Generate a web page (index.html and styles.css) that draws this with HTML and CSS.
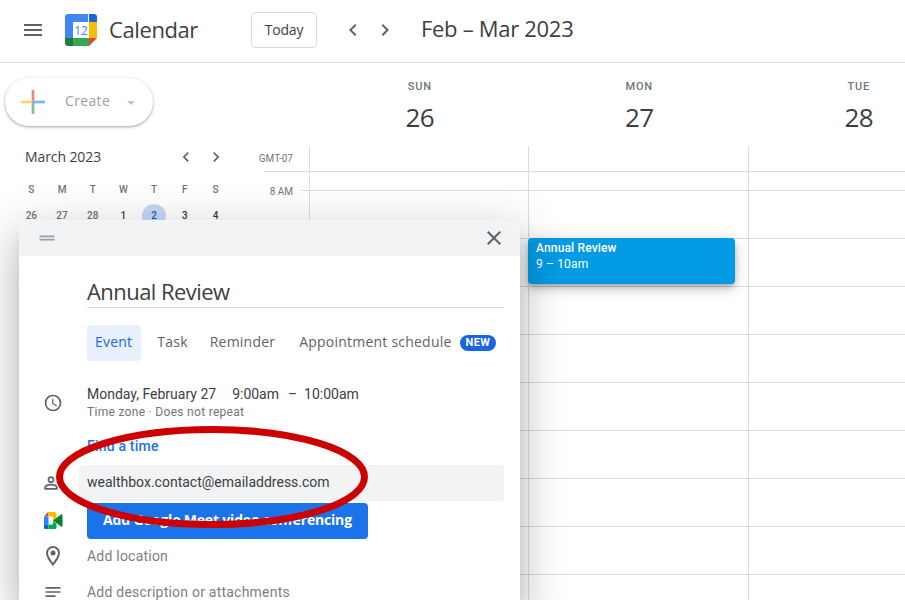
FILE: index.html
```html
<!DOCTYPE html>
<html lang="en">
<head>
<meta charset="utf-8">
<title>Calendar</title>
<link rel="stylesheet" href="styles.css">
</head>
<body>
<div class="app">
  <header class="topbar">
    <button class="icon-btn menu" aria-label="Main menu">
      <svg width="24" height="24" viewBox="0 0 24 24"><path fill="#5f6368" d="M3 18h18v-2H3v2zm0-5h18v-2H3v2zm0-7v2h18V6H3z"/></svg>
    </button>
    <svg class="logo" width="32" height="32" viewBox="0 0 32 32">
      <path fill="#4285f4" d="M3 0h20v8H8v16H0V3a3 3 0 0 1 3-3z"/>
      <path fill="#1967d2" d="M24 0h5a3 3 0 0 1 3 3v5h-8z"/>
      <path fill="#fbbc04" d="M24 8h8v16h-8z"/>
      <path fill="#34a853" d="M8 24h16v8H8z"/>
      <path fill="#188038" d="M0 24h8v8H3a3 3 0 0 1-3-3z"/>
      <path fill="#ea4335" d="M24 24h8l-8 8z"/>
      <rect x="8" y="8" width="16" height="16" fill="#fff"/>
      <text x="16" y="21" text-anchor="middle" class="logo-num">12</text>
    </svg>
    <span class="brand">Calendar</span>
    <button class="today">Today</button>
    <div class="nav">
      <svg width="24" height="24" viewBox="0 0 24 24"><path fill="#5f6368" d="M15.4 7.4 14 6l-6 6 6 6 1.4-1.4L10.8 12z"/></svg>
      <svg width="24" height="24" viewBox="0 0 24 24"><path fill="#5f6368" d="M10 6 8.6 7.4 13.2 12l-4.600 4.600L10 18l6-6z"/></svg>
    </div>
    <span class="range">Feb – Mar 2023</span>
  </header>

  <div class="content">
    <aside class="sidebar">
      <button class="create">
        <svg class="plus" width="24" height="24" viewBox="0 0 36 36">
          <path fill="#34a853" d="M16 16v20h4V20z"/>
          <path fill="#4285f4" d="M36 16H16v4h20z"/>
          <path fill="#fbbc05" d="M0 16h16v4H0z"/>
          <path fill="#ea4335" d="M20 0h-4v16h4z"/>
        </svg>
        <span class="create-label">Create</span>
        <span class="caret"></span>
      </button>
      <div class="mini-head">
        <span class="mini-title">March 2023</span>
        <svg width="20" height="20" viewBox="0 0 24 24"><path fill="#5f6368" d="M15.4 7.4 14 6l-6 6 6 6 1.4-1.4L10.8 12z"/></svg>
        <svg width="20" height="20" viewBox="0 0 24 24"><path fill="#5f6368" d="M10 6 8.6 7.4 13.2 12l-4.600 4.600L10 18l6-6z"/></svg>
      </div>
      <div class="mini-grid">
        <span class="dow">S</span><span class="dow">M</span><span class="dow">T</span><span class="dow">W</span><span class="dow">T</span><span class="dow">F</span><span class="dow">S</span>
        <span class="d muted">26</span><span class="d muted">27</span><span class="d muted">28</span><span class="d">1</span><span class="d sel">2</span><span class="d">3</span><span class="d">4</span>
      </div>
    </aside>

    <section class="calendar">
      <div class="week-head">
        <div class="day-head"><span class="dname">SUN</span><span class="dnum">26</span></div>
        <div class="day-head"><span class="dname">MON</span><span class="dnum">27</span></div>
        <div class="day-head"><span class="dname">TUE</span><span class="dnum">28</span></div>
      </div>
      <div class="week-body">
        <div class="times">
          <div class="tz">GMT-07</div>
          <div class="t8"><span>8 AM</span><i></i></div>
        </div>
        <div class="cols">
          <div class="col"></div>
          <div class="col">
            <div class="event"><strong>Annual Review</strong><span>9 – 10am</span></div>
          </div>
          <div class="col"></div>
        </div>
      </div>
    </section>
  </div>
</div>

<div class="dialog">
  <div class="dlg-head">
    <svg width="20" height="20" viewBox="0 0 24 24"><path fill="#9aa0a6" d="M3 9h18v2H3zM3 13h18v2H3z"/></svg>
    <svg width="24" height="24" viewBox="0 0 24 24"><path fill="#5f6368" d="M19 6.400 17.600 5 12 10.600 6.400 5 5 6.400 10.600 12 5 17.600 6.400 19 12 13.400 17.600 19 19 17.600 13.400 12z"/></svg>
  </div>
  <div class="dlg-title">Annual Review</div>
  <div class="tabs">
    <span class="tab on">Event</span>
    <span class="tab task">Task</span>
    <span class="tab">Reminder</span>
    <span class="tab">Appointment schedule</span>
    <span class="new">NEW</span>
  </div>
  <div class="row when">
    <svg width="20" height="20" viewBox="0 0 24 24"><path fill="#5f6368" d="M12 2a10 10 0 1 0 0 20 10 10 0 0 0 0-20zm0 18a8 8 0 1 1 0-16 8 8 0 0 1 0 16zm.5-13H11v6l5.200 3.200.8-1.300-4.500-2.700z"/></svg>
    <div class="when-text">
      <div class="when-main"><span>Monday, February 27</span><span class="w-t1">9:00am</span><span class="w-dash">–</span><span class="w-t2">10:00am</span></div>
      <div class="when-sub">Time zone · Does not repeat</div>
    </div>
  </div>
  <div class="find">Find a time</div>
  <div class="row guest">
    <svg width="20" height="20" viewBox="0 0 24 24"><path fill="#5f6368" d="M12 12a4 4 0 1 0 0-8 4 4 0 0 0 0 8zm0-6a2 2 0 1 1 0 4 2 2 0 0 1 0-4zm0 7c-2.700 0-8 1.300-8 4v3h16v-3c0-2.700-5.300-4-8-4zm6 5H6v-1c.2-.7 3.300-2 6-2s5.800 1.300 6 2z"/></svg>
    <div class="guest-input">wealthbox.contact@emailaddress.com</div>
  </div>
  <div class="row meet">
    <svg width="20" height="18" viewBox="0 0 20 18">
      <path fill="#ea4335" d="M4 0 0 4.500h4.500z"/>
      <path fill="#2684fc" d="M0 4.500h4.500v8H0z"/>
      <path fill="#0066da" d="M0 12.500h4.500V17H1.500A1.500 1.500 0 0 1 0 15.500z"/>
      <path fill="#ffba00" d="M4 0h7a1.500 1.500 0 0 1 1.500 1.500V6L9 8.500V4.500H4.500z"/>
      <path fill="#00ac47" d="M4.500 12.500H9V9l3.500 2.500v4A1.500 1.500 0 0 1 11 17H4.500z"/>
      <path fill="#00832d" d="m12.500 6 4.500-3.500c.7-.5 1.500 0 1.500.7v10.600c0 .8-.8 1.200-1.500.7l-4.500-3.500-3.500-2.500z"/>
    </svg>
    <button class="meet-btn"><span class="meet-label">Add Google Meet video conferencing</span></button>
  </div>
  <div class="row loc">
    <svg width="24" height="24" viewBox="0 0 24 24"><path fill="#5f6368" d="M12 2a7 7 0 0 0-7 7c0 5.200 7 13 7 13s7-7.800 7-13a7 7 0 0 0-7-7zM7 9a5 5 0 0 1 10 0c0 2.900-2.900 7.200-5 9.900C9.900 16.200 7 11.900 7 9z"/><circle cx="12" cy="9" r="2.500" fill="#5f6368"/></svg>
    <span class="add">Add location</span>
  </div>
  <div class="row desc">
    <svg width="20" height="20" viewBox="0 0 24 24"><path fill="#5f6368" d="M3 6h18v2H3zM3 11h18v2H3zM3 16h12v2H3z"/></svg>
    <span class="add">Add description or attachments</span>
  </div>
</div>

<svg class="circle" width="330" height="120" viewBox="0 0 330 120" aria-hidden="true">
  <ellipse cx="159" cy="53" rx="152.500" ry="47.500" fill="none" stroke="#cc0000" stroke-width="7"/>
</svg>
</body>
</html>
```
FILE: styles.css
```css
* { box-sizing: border-box; }
html, body { margin: 0; height: 100%; overflow: hidden; }
body { background: #fff; font-family: Roboto, "Liberation Sans", sans-serif; color: #3c4043; position: relative; width: 905px; height: 600px; }
button { font: inherit; border: 0; background: none; padding: 0; color: inherit; }
svg { display: block; flex: none; }

.app { width: 905px; height: 600px; display: flex; flex-direction: column; overflow: hidden; }

.topbar { height: 63px; flex: none; display: flex; align-items: center; border-bottom: 1px solid #dadce0; padding-left: 21px; padding-bottom: 3px; }
.menu { width: 24px; height: 24px; margin-right: 20px; }
.logo { margin-right: 12px; }
.logo-num { font: 500 12px "Open Sans", Roboto, sans-serif; fill: #4285f4; }
.brand { font: 400 22px "Open Sans", Roboto, sans-serif; color: #3c4043; width: 142px; letter-spacing: -.4px; padding-bottom: 2px; }
.today { width: 66px; height: 36px; border: 1px solid #dadce0; border-radius: 4px; font: 500 14px "Open Sans", Roboto, sans-serif; color: #3c4043; letter-spacing: -.2px; }
.nav { display: flex; gap: 8px; margin-left: 24px; }
.range { font: 400 22px "Open Sans", Roboto, sans-serif; margin-left: 24px; letter-spacing: -.3px; color: #3c4043; padding-bottom: 3px; }

.content { flex: 1; display: flex; min-height: 0; }
.sidebar { width: 250px; flex: none; padding-top: 15px; }
.create { margin-left: 5px; width: 148px; height: 48px; border-radius: 24px; background: #fff; box-shadow: 0 1px 2px rgba(60,64,67,.3), 0 1px 3px 1px rgba(60,64,67,.15); display: flex; align-items: center; padding-left: 16px; }
.plus { opacity: .65; }
.create-label { font: 500 14px "Open Sans", Roboto, sans-serif; color: #9aa0a6; margin-left: 20px; letter-spacing: .35px; padding-bottom: 3px; }
.caret { margin-left: 17px; margin-top: 2px; border: 4.500px solid transparent; border-top-color: #bdc1c6; border-bottom-width: 0; }

.mini-head { display: flex; align-items: center; margin-top: 21px; padding-left: 25px; height: 20px; }
.mini-title { font: 500 14px "Open Sans", Roboto, sans-serif; letter-spacing: -.1px; width: 151px; color: #3c4043; padding-bottom: 2px; }
.mini-head svg + svg { margin-left: 10px; }
.mini-grid { margin: 10px 0 0 16px; width: 216px; display: grid; grid-template-columns: repeat(7, 30.700px); grid-auto-rows: 24px; align-items: center; justify-items: center; row-gap: 3px; }
.dow { font-size: 10px; font-weight: 500; color: #70757a; }
.d { font-size: 10px; font-weight: 500; color: #3c4043; width: 24px; height: 24px; line-height: 24px; text-align: center; border-radius: 50%; }
.d.muted { color: #70757a; }
.d.sel { background: #c6d9f5; color: #185abc; }

.calendar { flex: 1; min-width: 0; display: flex; flex-direction: column; overflow: hidden; }
.week-head { height: 83px; flex: none; display: grid; grid-template-columns: repeat(3, 219.500px); margin-left: 60px; }
.day-head { display: flex; flex-direction: column; align-items: center; padding-top: 17px; }
.dname { font-size: 11px; font-weight: 500; color: #70757a; letter-spacing: .8px; line-height: 14px; }
.dnum { font: 400 26px "Open Sans", Roboto, sans-serif; color: #3c4043; line-height: 34px; margin-top: 6px; letter-spacing: -.5px; }

.week-body { flex: 1; display: flex; min-height: 0; }
.times { width: 59px; flex: none; }
.tz { height: 26px; font-size: 10px; color: #70757a; display: flex; justify-content: flex-end; padding-right: 16px; padding-top: 7px; border-bottom: 1px solid #dadce0; margin-left: 14px; white-space: nowrap; }
.t8 { height: 19px; position: relative; display: flex; justify-content: flex-end; align-items: flex-end; }
.t8 span { font-size: 10px; color: #70757a; position: absolute; right: 16px; bottom: -6px; }
.t8 i { width: 8px; height: 1px; background: #dadce0; }

.cols { flex: 1; display: grid; grid-template-columns: 219px 220px 220px; background-color: #fff;
  background-image: linear-gradient(#dadce0 1px, transparent 1px), repeating-linear-gradient(#dadce0 0 1px, transparent 1px 48px);
  background-position: 0 25px, 0 44px;
  background-repeat: no-repeat, no-repeat; }
.col { border-left: 1px solid #dadce0; position: relative; }
.event { position: absolute; left: -1px; top: 92px; width: 207px; height: 46px; background: #039be5; border-radius: 4px; color: #fff; font-size: 12px; line-height: 15.500px; padding: 3px 8px; display: flex; flex-direction: column; letter-spacing: .15px; box-shadow: 0 6px 10px 0 rgba(0,0,0,.14), 0 1px 18px 0 rgba(0,0,0,.12), 0 3px 5px -1px rgba(0,0,0,.2); }
.event strong { font-weight: 500; }

.dialog { position: absolute; left: 19px; top: 220px; width: 501px; height: 380px; background: #fff; border-radius: 8px 8px 0 0; box-shadow: 0 24px 38px 3px rgba(0,0,0,.14), 0 9px 46px 8px rgba(0,0,0,.12), 0 11px 15px -7px rgba(0,0,0,.2); }
.dlg-head { height: 36px; background: #f1f3f4; border-radius: 8px 8px 0 0; display: flex; align-items: center; justify-content: space-between; padding: 0 14px 0 18px; margin-bottom: 22px; }
.dlg-title { margin-left: 68px; width: 417px; height: 30px; border-bottom: 1px solid #dadce0; font: 400 22px "Open Sans", Roboto, sans-serif; line-height: 27px; letter-spacing: -.55px; color: #3c4043; }
.tabs { margin: 17px 0 0 68px; display: flex; align-items: center; height: 36px; font: 500 14px "Open Sans", Roboto, sans-serif; color: #5f6368; }
.tab { height: 36px; line-height: 34px; padding: 0 8px; border-radius: 4px; letter-spacing: .22px; }
.tab.on { background: #e8f0fe; color: #1967d2; margin-right: 8px; padding-right: 9px; }
.tab + .tab { margin-right: 8px; }
.tab.task { margin-right: 6px; }
.new { background: #1a66e0; color: #fff; border-radius: 8px; height: 16px; padding: 0 6px; font: 700 11px/16px Roboto, sans-serif; letter-spacing: .4px; margin-left: -8px; }

.row { display: flex; align-items: center; }
.row > svg { margin-left: 24px; margin-right: 24px; }
.when { margin-top: 24px; }
.when-main { font-size: 14px; line-height: 18px; display: flex; color: #3c4043; }
.w-t1 { margin-left: 16px; }
.w-dash { margin-left: 9px; width: 16px; }
.when-sub { font-size: 12px; line-height: 18px; color: #70757a; letter-spacing: .3px; }
.find { margin: 16px 0 0 68px; font-size: 14px; font-weight: 500; line-height: 18px; color: #1a73e8; letter-spacing: .2px; }
.guest { margin-top: 10px; height: 36px; }
.guest > svg { margin-right: 18px; margin-left: 22px; }
.guest-input { width: 425px; height: 36px; background: #f1f3f4; border-radius: 4px; font-size: 14px; line-height: 35px; padding-left: 8px; color: #3c4043; }
.meet { margin-top: 2px; }
.meet > svg { margin-left: 25px; margin-right: 23px; }
.meet-btn { width: 281px; height: 36px; background: #1a73e8; color: #fff; border-radius: 4px; font: 700 14px "Open Sans", Roboto, sans-serif; letter-spacing: -.18px; padding-bottom: 3px; }
.loc { margin-top: 4px; height: 26px; }
.loc > svg { margin-left: 22px; margin-right: 22px; }
.add { font-size: 14px; color: #7a7f85; letter-spacing: .22px; }
.desc { margin-top: 10px; height: 26px; }

.circle { position: absolute; left: 53px; top: 424px; }
```
